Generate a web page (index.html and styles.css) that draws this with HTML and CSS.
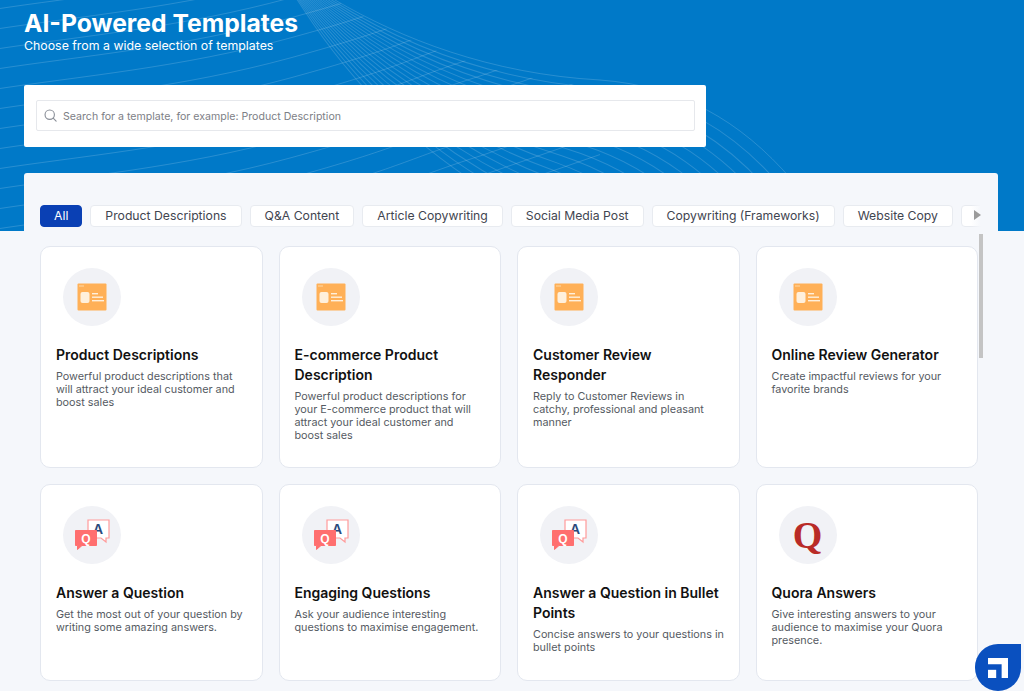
FILE: index.html
```html
<!DOCTYPE html>
<html lang="en">
<head>
  <meta charset="UTF-8" />
  <title>AI-Powered Templates</title>
  <link rel="stylesheet" href="styles.css">
</head>
<body>
  <header class="hero">
    <!-- background wave lines -->
    <svg class="hero-waves" width="1024" height="231" viewBox="0 0 1024 231" fill="none" aria-hidden="true">
      <defs>
        <path id="waveA" d="M-10 100C80 86 180 78 290 48S410 8 480-14L700-90"/>
        <path id="waveB" d="M272-38L335 0C400 38 490 74 600 80C680 86 740 120 792 180"/>
        <clipPath id="waveClip">
          <path d="M0 0H335C400 40 490 80 600 86V231H0z"/>
        </clipPath>
      </defs>
      <g class="wave-lines" clip-path="url(#waveClip)">
        <use href="#waveA" y="-90"/><use href="#waveA" y="-70"/><use href="#waveA" y="-50"/>
        <use href="#waveA" y="-30"/><use href="#waveA" y="-10"/><use href="#waveA" y="10"/>
        <use href="#waveA" y="30"/><use href="#waveA" y="50"/><use href="#waveA" y="70"/>
        <use href="#waveA" y="90"/><use href="#waveA" y="110"/><use href="#waveA" y="130"/>
        <use href="#waveA" y="150"/><use href="#waveA" y="170"/><use href="#waveA" y="190"/>
        <use href="#waveA" y="210"/><use href="#waveA" y="230"/>
      </g>
      <g class="wave-lines">
        <use href="#waveB"/>
        <use href="#waveB" transform="rotate(1.4 272 -38)"/><use href="#waveB" transform="rotate(2.8 272 -38)"/>
        <use href="#waveB" transform="rotate(4.2 272 -38)"/><use href="#waveB" transform="rotate(5.6 272 -38)"/>
        <use href="#waveB" transform="rotate(7 272 -38)"/><use href="#waveB" transform="rotate(8.4 272 -38)"/>
        <use href="#waveB" transform="rotate(9.8 272 -38)"/><use href="#waveB" transform="rotate(11.2 272 -38)"/>
        <use href="#waveB" transform="rotate(12.6 272 -38)"/><use href="#waveB" transform="rotate(14 272 -38)"/>
        <use href="#waveB" transform="rotate(15.4 272 -38)"/><use href="#waveB" transform="rotate(16.8 272 -38)"/>
        <use href="#waveB" transform="rotate(18.2 272 -38)"/><use href="#waveB" transform="rotate(19.6 272 -38)"/>
        <use href="#waveB" transform="rotate(21 272 -38)"/><use href="#waveB" transform="rotate(22.4 272 -38)"/>
        <use href="#waveB" transform="rotate(23.8 272 -38)"/><use href="#waveB" transform="rotate(25.2 272 -38)"/>
      </g>
    </svg>
    <h1 class="hero-title">AI-Powered Templates</h1>
    <p class="hero-sub">Choose from a wide selection of templates</p>
    <div class="search-card">
      <label class="search-box">
        <svg width="13" height="13" viewBox="0 0 15 15" fill="none" stroke="#8a8f98" stroke-width="1.3" stroke-linecap="round">
          <circle cx="6.6" cy="6.6" r="5.4"/>
          <path d="M10.6 10.6l3.4 3.4"/>
        </svg>
        <input type="text" placeholder="Search for a template, for example: Product Description">
      </label>
    </div>
  </header>

  <main class="panel">
    <nav class="tabs">
      <div class="tab-track">
        <a class="tab active">All</a>
        <a class="tab">Product Descriptions</a>
        <a class="tab">Q&amp;A Content</a>
        <a class="tab">Article Copywriting</a>
        <a class="tab">Social Media Post</a>
        <a class="tab">Copywriting (Frameworks)</a>
        <a class="tab">Website Copy</a>
        <a class="tab tab-more"></a>
      </div>
      <span class="tab-next"></span>
    </nav>

    <!-- shared icons -->
    <svg class="icon-defs" width="0" height="0" aria-hidden="true">
      <defs>
        <symbol id="icon-product" viewBox="0 0 30 28">
          <rect x="0.5" y="0.5" width="29" height="27" rx="1" fill="#ffb057"/>
          <rect x="2" y="2.5" width="5" height="1" fill="#ffd9a8"/>
          <rect x="3.5" y="9" width="9" height="11" rx="2" fill="#fff0dc"/>
          <rect x="15" y="10" width="6" height="1.4" fill="#fff0dc"/>
          <rect x="15" y="13.5" width="11" height="1.4" fill="#fff0dc"/>
          <rect x="15" y="17" width="12" height="1.4" fill="#fff0dc"/>
        </symbol>
        <symbol id="icon-qa" viewBox="0 0 36 32">
          <path d="M14 1h21v18h-3v4l-5-4H14z" fill="#fff" stroke="#ff9a9a" stroke-width="1.200"/>
          <text x="24" y="15" class="qa-a">A</text>
          <path d="M1.500 11.500h21v15H8l-4.500 4V26.500h-2z" fill="#ff6f6f" stroke="#ff6f6f" stroke-linejoin="round"/>
          <text x="12" y="23.500" class="qa-q">Q</text>
        </symbol>
      </defs>
    </svg>

    <section class="grid">
      <article class="card">
        <div class="card-icon"><svg class="icon-product"><use href="#icon-product"/></svg></div>
        <h3>Product Descriptions</h3>
        <p>Powerful product descriptions that will attract your ideal customer and boost sales</p>
      </article>
      <article class="card">
        <div class="card-icon"><svg class="icon-product"><use href="#icon-product"/></svg></div>
        <h3>E-commerce Product Description</h3>
        <p>Powerful product descriptions for your E-commerce product that will attract your ideal customer and<br>boost sales</p>
      </article>
      <article class="card">
        <div class="card-icon"><svg class="icon-product"><use href="#icon-product"/></svg></div>
        <h3>Customer Review Responder</h3>
        <p>Reply to Customer Reviews in<br>catchy, professional and pleasant manner</p>
      </article>
      <article class="card">
        <div class="card-icon"><svg class="icon-product"><use href="#icon-product"/></svg></div>
        <h3>Online Review Generator</h3>
        <p>Create impactful reviews for your favorite brands</p>
      </article>
      <article class="card">
        <div class="card-icon"><svg class="icon-qa"><use href="#icon-qa"/></svg></div>
        <h3>Answer a Question</h3>
        <p>Get the most out of your question by writing some amazing answers.</p>
      </article>
      <article class="card">
        <div class="card-icon"><svg class="icon-qa"><use href="#icon-qa"/></svg></div>
        <h3>Engaging Questions</h3>
        <p>Ask your audience interesting questions to maximise engagement.</p>
      </article>
      <article class="card">
        <div class="card-icon"><svg class="icon-qa"><use href="#icon-qa"/></svg></div>
        <h3>Answer a Question in Bullet Points</h3>
        <p>Concise answers to your questions in bullet points</p>
      </article>
      <article class="card">
        <div class="card-icon"><span class="quora-q">Q</span></div>
        <h3>Quora Answers</h3>
        <p>Give interesting answers to your audience to maximise your Quora presence.</p>
      </article>
    </section>

    <span class="scroll-thumb"></span>
  </main>

  <a class="chat-badge">
    <svg width="20" height="20" viewBox="0 0 22 22" fill="#fff">
      <path d="M0 0h22v22h-7V7H0z"/>
      <rect x="0" y="13" width="9" height="9"/>
    </svg>
  </a>
</body>
</html>
```

FILE: styles.css
```css
* {
  box-sizing: border-box;
}

html, body {
  height: 691px;
  margin: 0;
  overflow: hidden;
}

body {
  font-family: 'Inter', 'Liberation Sans', sans-serif;
  background-color: #f5f7fb;
  color: #111;
}

.hero {
  position: relative;
  height: 231px;
  padding: 9px 24px 0;
  background-color: #0079c8;
  color: white;
}

.hero-waves {
  position: absolute;
  top: 0;
  left: 0;
}

.wave-lines {
  stroke: rgba(255,255,255,0.16);
  stroke-width: 1;
}

.hero-title {
  position: relative;
  margin: 0;
  font-size: 24.700px;
  line-height: 28px;
  font-weight: 700;
}

.hero-sub {
  position: relative;
  margin: 1px 0 0;
  font-size: 12.350px;
  line-height: 16px;
}

.search-card {
  position: relative;
  width: 682px;
  height: 62px;
  margin-top: 31px;
  padding: 15px 11px 0 12px;
  background-color: white;
  border-radius: 2px;
}

.search-box {
  display: flex;
  align-items: center;
  gap: 6px;
  height: 31px;
  padding: 0 7px;
  border: 1px solid #e6e8ec;
  border-radius: 2px;
}

.search-box input {
  flex: 1;
  border: none;
  outline: none;
  padding: 2px 0 0;
  font-family: inherit;
  font-size: 10.600px;
}

.search-box input::placeholder {
  color: #7d8086;
  opacity: 1;
}

.panel {
  position: relative;
  width: 974px;
  height: 518px;
  margin: -58px 0 0 24px;
  padding: 32px 20px 0 16px;
  background-color: #f5f7fb;
  border-radius: 3px 3px 0 0;
}

.tabs {
  position: relative;
  width: 945px;
  overflow: hidden;
}

.tab-track {
  display: flex;
  gap: 8px;
  width: max-content;
}

.tab {
  height: 22px;
  padding: 0 14px;
  font-size: 12.230px;
  line-height: 20px;
  color: #3f4550;
  background-color: white;
  border: 1px solid #e8ebf0;
  border-radius: 4px;
}

.tab.active {
  padding: 0 13px;
  background-color: #0a40b4;
  border-color: #0a40b4;
  color: white;
}

.tab-more {
  width: 60px;
}

.tab-next {
  position: absolute;
  top: 0;
  right: 0;
  width: 14px;
  height: 22px;
  background: linear-gradient(to right, rgba(245,247,251,0), #f5f7fb 70%);
}

.tab-next::after {
  content: "";
  position: absolute;
  top: 5px;
  left: 3px;
  border-left: 7px solid #9b9b9b;
  border-top: 5.500px solid transparent;
  border-bottom: 5.500px solid transparent;
}

.icon-defs {
  position: absolute;
}

.grid {
  display: grid;
  grid-template-columns: repeat(4, 1fr);
  grid-template-rows: 222px 197px;
  gap: 16px;
  margin-top: 19px;
}

.card {
  padding: 21px 12px 0 15px;
  background-color: white;
  border: 1px solid #e3e7ef;
  border-radius: 10px;
}

.card-icon {
  display: flex;
  align-items: center;
  justify-content: center;
  width: 58px;
  height: 58px;
  margin: 0 0 19px 7px;
  background-color: #f1f2f6;
  border-radius: 50%;
}

.icon-product {
  width: 30px;
  height: 28px;
}

.icon-qa {
  width: 36px;
  height: 32px;
}

.qa-a {
  font-family: 'Liberation Sans', sans-serif;
  font-size: 14px;
  font-weight: 700;
  text-anchor: middle;
  fill: #2c4a7c;
}

.qa-q {
  font-family: 'Liberation Sans', sans-serif;
  font-size: 12px;
  font-weight: 700;
  text-anchor: middle;
  fill: #fff;
}

.quora-q {
  font-family: 'Liberation Serif', serif;
  font-size: 38px;
  line-height: 38px;
  font-weight: 700;
  color: #b92b27;
}

.card h3 {
  margin: 0;
  font-size: 14px;
  line-height: 20px;
  font-weight: 600;
  color: #111;
}

.card p {
  margin: 5px 0 0;
  font-size: 10.800px;
  line-height: 13px;
  color: #555a62;
}

.scroll-thumb {
  position: absolute;
  top: 61px;
  left: 955px;
  width: 4px;
  height: 124px;
  background-color: #c4c4c4;
}

.chat-badge {
  position: fixed;
  left: 975px;
  top: 644px;
  display: flex;
  align-items: center;
  justify-content: center;
  width: 46px;
  height: 47px;
  background-color: #0a50bf;
  border-radius: 23px 0 23px 23px;
}
```
